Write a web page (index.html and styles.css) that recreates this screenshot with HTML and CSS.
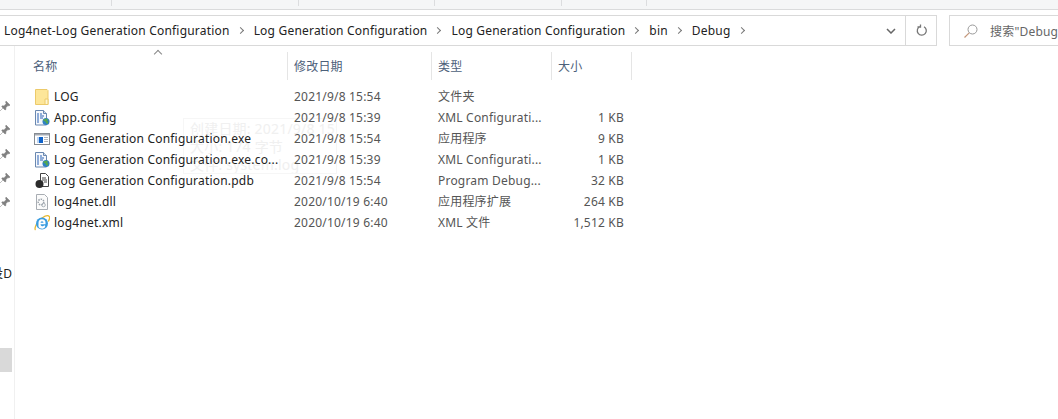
FILE: index.html
```html
<!DOCTYPE html>
<html lang="zh-CN">
<head>
    <meta charset="UTF-8">
    <title>Debug</title>
    <link rel="stylesheet" href="styles.css">
</head>
<body>
    <svg class="defs" width="0" height="0">
        <symbol id="i-pin" viewBox="0 0 10 10">
            <path d="M6 0l4 4-1 1-1-.4-2.200 2.200.2 1.600-1 .6L1.700 5.700l.6-1 1.600.2L6.100 2.700 5.600 1.500zM3 7l-3 3" fill="#808080" stroke="#808080" stroke-width=".5"/>
        </symbol>
        <symbol id="i-folder" viewBox="0 0 16 16">
            <path d="M1.500 .5h11.500l1 1v14h-12.500z" fill="#fde699" stroke="#ecca6a"/>
            <path d="M11 15.500v-5.500h3v5.500z" fill="#fff6d0" stroke="#ecca6a"/>
        </symbol>
        <symbol id="i-config" viewBox="0 0 16 16">
            <path d="M1.500 .5h8l3 3v11.500h-11z" fill="#f6f8fc" stroke="#6a88b0"/>
            <path d="M9.500 .5v3h3" fill="#cfd9e8" stroke="#6a88b0"/>
            <path d="M3 4h2M6 4h2M3 6h2M6 6h4M3 8h2M6 8h3M3 10h2M3 12h2" stroke="#2a63b5"/>
            <circle cx="12" cy="11.500" r="3.500" fill="#2f7fc4"/>
            <path d="M9.500 9.500l3-1 1.500 1-1 1.500 1.500.5-1 2.500-1.500-1-.5-1.500-2-.5z" fill="#55a84c"/>
        </symbol>
        <symbol id="i-exe" viewBox="0 0 16 16">
            <rect x=".5" y="2.500" width="15" height="11" fill="#fff" stroke="#868b92"/>
            <rect x="1" y="3" width="14" height="1.500" fill="#a5abb3"/>
            <rect x="5" y="6" width="4" height="6" fill="#0f62c9"/>
            <rect x="3" y="6" width="2" height="6" fill="#bcd4f2"/>
            <path d="M10 6.500h4M10 8.500h4M10 10.500h4" stroke="#b4b8bd"/>
        </symbol>
        <symbol id="i-pdb" viewBox="0 0 16 16">
            <path d="M6.500 .5h5l3 3v10h-8z" fill="#fff" stroke="#444"/>
            <path d="M8 5h4M8 7h5M10 9h3" stroke="#444"/>
            <circle cx="5.500" cy="11" r="4" fill="#2b2b2b"/>
        </symbol>
        <symbol id="i-dll" viewBox="0 0 16 16">
            <path d="M2.500 .5h8l3 3v12h-11z" fill="#fbfbfb" stroke="#a8adb3"/>
            <circle cx="7" cy="8" r="2.800" fill="none" stroke="#9aa2aa" stroke-width="1.500" stroke-dasharray="1.500 1"/>
            <circle cx="9.500" cy="11" r="1.800" fill="none" stroke="#aab1b8"/>
        </symbol>
        <symbol id="i-ie" viewBox="0 0 16 16">
            <path d="M1.500 15C0 13.500 3 6 8 3c3-2 6-3 7.300-1.500 1 1.500-.5 4-1 5" fill="none" stroke="#e8b72c" stroke-width="1.300"/>
            <circle cx="8" cy="8.500" r="6" fill="#3a9de0"/>
            <path d="M4.500 7.800a3.500 3.500 0 0 1 7 0v1.500h-5a2 2 0 0 0 3.700 1l1.200.6a3.500 3.500 0 0 1-6.900-1.500z" fill="#fff"/>
            <path d="M6.500 7.800h3a1.500 1.500 0 0 0-3 0z" fill="#3a9de0"/>
        </symbol>
    </svg>

    <div class="ribbon">
        <div class="group group-first"></div>
        <div class="group group-org"><span>组织</span></div>
        <div class="group group-new"><span>新建</span></div>
        <div class="group group-open"><span>打开</span></div>
        <div class="group group-select"><span>选择</span></div>
    </div>

    <div class="toolbar">
        <div class="address">
            <div class="crumbs">
                <span>Log4net-Log Generation Configuration</span><i class="chev"></i>
                <span>Log Generation Configuration</span><i class="chev"></i>
                <span>Log Generation Configuration</span><i class="chev"></i>
                <span>bin</span><i class="chev"></i>
                <span>Debug</span><i class="chev"></i>
            </div>
            <div class="drop">
                <svg width="10" height="6" viewBox="0 0 10 6"><path d="M1 1l4 4 4-4" fill="none" stroke="#666" stroke-width="1.500"/></svg>
            </div>
            <div class="refresh">
                <svg width="12" height="13" viewBox="0 0 12 13"><path d="M4 2.500a4.500 4.500 0 1 0 4 .2M4.500.5v2.500h-3" fill="none" stroke="#777" stroke-width="1.300"/></svg>
            </div>
        </div>
        <div class="search">
            <svg width="14" height="14" viewBox="0 0 14 14"><circle cx="8.500" cy="5.500" r="4.500" fill="none" stroke="#999"/><path d="M5.200 8.800L.5 13.500" stroke="#c4977a" stroke-width="1.200"/></svg>
            <span>搜索"Debug"</span>
        </div>
    </div>

    <div class="main">
        <div class="side">
            <div class="pins">
                <svg class="pin"><use href="#i-pin"/></svg>
                <svg class="pin"><use href="#i-pin"/></svg>
                <svg class="pin"><use href="#i-pin"/></svg>
                <svg class="pin"><use href="#i-pin"/></svg>
                <svg class="pin"><use href="#i-pin"/></svg>
            </div>
            <div class="side-text">没D</div>
            <div class="side-selected"></div>
        </div>

        <div class="list">
            <div class="head">
                <div class="col col-name">名称<i class="sort"></i></div>
                <div class="col col-date">修改日期</div>
                <div class="col col-type">类型</div>
                <div class="col col-size">大小</div>
            </div>

            <div class="row">
                <div class="name"><svg class="icon"><use href="#i-folder"/></svg>LOG</div>
                <div class="date">2021/9/8 15:54</div>
                <div class="type">文件夹</div>
                <div class="size"></div>
            </div>
            <div class="row">
                <div class="name"><svg class="icon"><use href="#i-config"/></svg>App.config</div>
                <div class="date">2021/9/8 15:39</div>
                <div class="type">XML Configurati...</div>
                <div class="size">1 KB</div>
            </div>
            <div class="row">
                <div class="name"><svg class="icon"><use href="#i-exe"/></svg>Log Generation Configuration.exe</div>
                <div class="date">2021/9/8 15:54</div>
                <div class="type">应用程序</div>
                <div class="size">9 KB</div>
            </div>
            <div class="row">
                <div class="name"><svg class="icon"><use href="#i-config"/></svg>Log Generation Configuration.exe.co...</div>
                <div class="date">2021/9/8 15:39</div>
                <div class="type">XML Configurati...</div>
                <div class="size">1 KB</div>
            </div>
            <div class="row">
                <div class="name"><svg class="icon"><use href="#i-pdb"/></svg>Log Generation Configuration.pdb</div>
                <div class="date">2021/9/8 15:54</div>
                <div class="type">Program Debug...</div>
                <div class="size">32 KB</div>
            </div>
            <div class="row">
                <div class="name"><svg class="icon"><use href="#i-dll"/></svg>log4net.dll</div>
                <div class="date">2020/10/19 6:40</div>
                <div class="type">应用程序扩展</div>
                <div class="size">264 KB</div>
            </div>
            <div class="row">
                <div class="name"><svg class="icon"><use href="#i-ie"/></svg>log4net.xml</div>
                <div class="date">2020/10/19 6:40</div>
                <div class="type">XML 文件</div>
                <div class="size">1,512 KB</div>
            </div>
        </div>

        <div class="ghost-tip">
            <div>创建日期: 2021/9/8 15:55</div>
            <div>大小: 174 字节</div>
            <div>文件: system.log</div>
        </div>
    </div>
</body>
</html>
```

FILE: styles.css
```css
* {
    box-sizing: border-box;
}
body {
    margin: 0;
    height: 419px;
    overflow: hidden;
    background-color: #fff;
    font-family: "Noto Sans", "Noto Sans CJK SC", sans-serif;
    font-size: 12px;
    letter-spacing: 0.2px;
    color: #222;
    display: flex;
    flex-direction: column;
}
.defs {
    position: absolute;
}

/* 顶部功能区，只露出底部一点 */
.ribbon {
    height: 10px;
    flex: none;
    display: flex;
    background-color: #f5f6f7;
    border-bottom: 1px solid #dadbdc;
}
.group {
    height: 6px;
    border-right: 1px solid #dcdddf;
    overflow: hidden;
    text-align: center;
    color: #444;
}
.group span {
    display: block;
    margin-top: -14px;
    line-height: 17px;
}
.group-first { width: 112px; }
.group-org { width: 187px; }
.group-new { width: 136px; }
.group-open { width: 127px; }
.group-select { width: 85px; }

/* 地址栏 */
.toolbar {
    flex: none;
    display: flex;
    gap: 12px;
    padding-top: 5px;
}
.address {
    width: 937px;
    height: 31px;
    display: flex;
    border: 1px solid #d9d9d9;
    border-left: none;
}
.crumbs {
    flex: 1;
    display: flex;
    align-items: center;
    padding-left: 4px;
    color: #222;
    white-space: nowrap;
}
.chev {
    width: 5px;
    height: 5px;
    margin: 0 11px 0 8px;
    border-top: 1px solid #777;
    border-right: 1px solid #777;
    transform: rotate(45deg);
}
.drop {
    width: 29px;
    display: flex;
    align-items: center;
    justify-content: center;
}
.refresh {
    width: 31px;
    padding-left: 2px;
    display: flex;
    align-items: center;
    justify-content: center;
    border-left: 1px solid #d9d9d9;
}
.search {
    flex: 1;
    height: 31px;
    display: flex;
    align-items: center;
    gap: 12px;
    padding-left: 14px;
    border: 1px solid #d9d9d9;
    border-right: none;
    color: #666;
    white-space: nowrap;
    overflow: hidden;
}
.search svg {
    flex: none;
}
.search span {
    flex: none;
}

/* 主体 */
.main {
    flex: 1;
    display: flex;
    position: relative;
}
.side {
    width: 15px;
    flex: none;
    border-right: 1px solid #f0f0f0;
    overflow: hidden;
}
.pins {
    display: flex;
    flex-direction: column;
    gap: 14px;
    padding-top: 55px;
}
.pin {
    display: block;
    width: 10px;
    height: 10px;
}
.side-text {
    margin: 59px 0 0 -9px;
    line-height: 16px;
    white-space: nowrap;
    color: #222;
}
.side-selected {
    width: 12px;
    height: 24px;
    margin-top: 66px;
    background-color: #d9d9d9;
}
.list {
    flex: 1;
    padding: 6px 0 0 18px;
    position: relative;
    z-index: 1;
}
.head {
    display: flex;
    height: 28px;
    margin-bottom: 6px;
    color: #4c607a;
}
.col {
    padding-left: 6px;
    padding-top: 1px;
    line-height: 28px;
    border-right: 1px solid #e5e5e5;
    position: relative;
}
.col-name { width: 255px; padding-left: 0; }
.col-date { width: 144px; }
.col-type { width: 120px; }
.col-size { width: 80px; }
.sort {
    position: absolute;
    left: 122px;
    top: -1px;
    width: 6px;
    height: 6px;
    border-top: 1px solid #888;
    border-left: 1px solid #888;
    transform: rotate(45deg);
}
.row {
    display: flex;
    height: 21px;
    line-height: 21px;
    color: #555;
    white-space: nowrap;
}
.name {
    width: 255px;
    display: flex;
    align-items: center;
    color: #222;
}
.icon {
    width: 16px;
    height: 16px;
    margin: 0 4px 0 1px;
    flex: none;
}
.date {
    width: 144px;
    padding-left: 6px;
}
.type {
    width: 120px;
    padding-left: 6px;
}
.size {
    width: 72px;
    text-align: right;
}

/* 下层残留的半透明提示框 */
.ghost-tip {
    position: absolute;
    left: 183px;
    top: 72px;
    width: 154px;
    height: 56px;
    padding: 1px 6px;
    overflow: hidden;
    font-size: 14px;
    line-height: 18px;
    white-space: nowrap;
    color: #f0f0f0;
    background-color: #fff;
    border: 1px solid #f6f6f6;
}
```
